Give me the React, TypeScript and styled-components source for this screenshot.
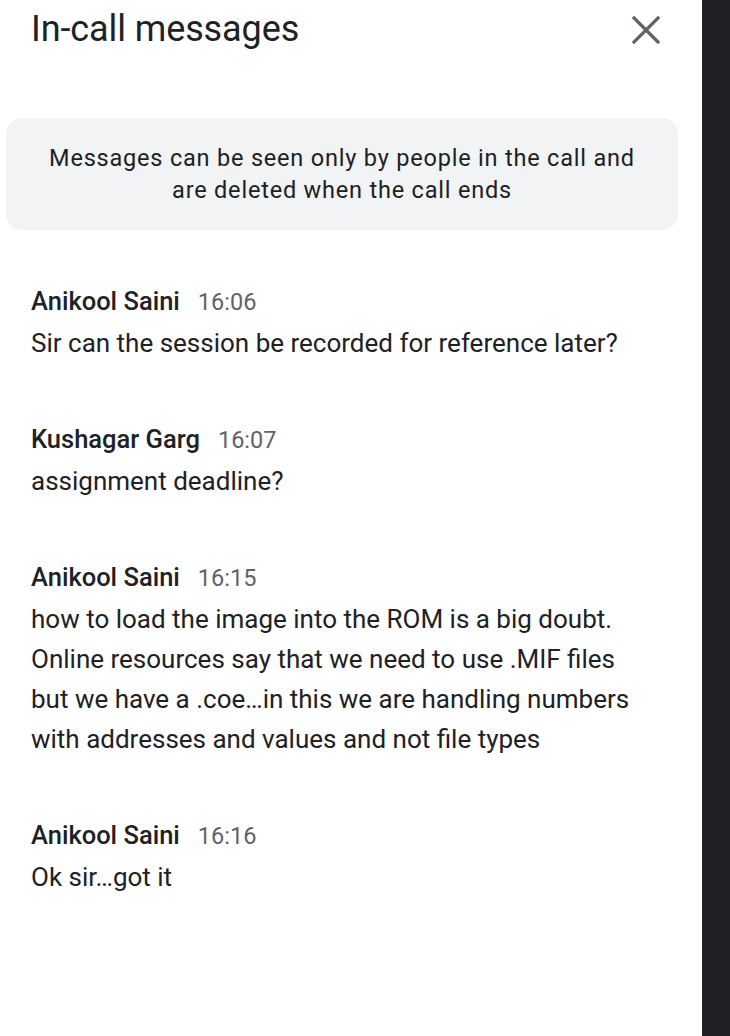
import React from 'react';
import styled, { createGlobalStyle } from 'styled-components';

type Message = {
  author: string;
  time: string;
  lines: string[];
};

const messages: Message[] = [
  {
    author: 'Anikool Saini',
    time: '16:06',
    lines: ['Sir can the session be recorded for reference later?'],
  },
  {
    author: 'Kushagar Garg',
    time: '16:07',
    lines: ['assignment deadline?'],
  },
  {
    author: 'Anikool Saini',
    time: '16:15',
    lines: [
      'how to load the image into the ROM is a big doubt.',
      'Online resources say that we need to use .MIF files',
      'but we have a .coe…in this we are handling numbers',
      'with addresses and values and not file types',
    ],
  },
  {
    author: 'Anikool Saini',
    time: '16:16',
    lines: ['Ok sir…got it'],
  },
];

const GlobalStyle = createGlobalStyle`
  html, body {
    margin: 0;
    padding: 0;
    background: #ffffff;
  }
  body {
    font-family: Roboto, "Liberation Sans", Arial, sans-serif;
    color: #202124;
  }
`;

export default function App() {
  return (
    <>
      <GlobalStyle />
      <StyledScreen>
        <StyledPanel>
          <StyledHeader>
            <StyledTitle>In-call messages</StyledTitle>
            <StyledClose aria-label="Close">
              <svg width="28" height="28" viewBox="0 0 28 28">
                <path
                  d="M2 2 L26 26 M26 2 L2 26"
                  stroke="#5f6368"
                  strokeWidth="3.2"
                  strokeLinecap="square"
                  fill="none"
                />
              </svg>
            </StyledClose>
          </StyledHeader>

          <StyledNotice>
            Messages can be seen only by people in the call and
            <br />
            are deleted when the call ends
          </StyledNotice>

          <StyledList>
            {messages.map((m, i) => (
              <StyledMessage key={i}>
                <StyledMeta>
                  <StyledAuthor>{m.author}</StyledAuthor>
                  <StyledTime>{m.time}</StyledTime>
                </StyledMeta>
                {m.lines.map((line, j) => (
                  <StyledLine key={j}>{line}</StyledLine>
                ))}
              </StyledMessage>
            ))}
          </StyledList>
        </StyledPanel>
        <StyledEdge />
      </StyledScreen>
    </>
  );
}

const StyledScreen = styled.div`
  display: flex;
  width: 730px;
  height: 1036px;
  overflow: hidden;
`;

const StyledPanel = styled.div`
  width: 702px;
  display: flex;
  flex-direction: column;
  background: #ffffff;
`;

const StyledEdge = styled.div`
  width: 28px;
  background: #202124;
`;

const StyledHeader = styled.div`
  display: flex;
  align-items: center;
  justify-content: space-between;
  height: 58px;
  padding: 0 42px 0 31px;
`;

const StyledTitle = styled.h1`
  margin: 0;
  font-family: Roboto, "Liberation Sans", sans-serif;
  font-weight: 400;
  font-size: 36px;
  letter-spacing: -0.1px;
  color: #202124;
`;

const StyledClose = styled.div`
  display: flex;
  width: 28px;
  height: 28px;
  margin-top: 2px;
`;

const StyledNotice = styled.div`
  margin: 60px 24px 0 6px;
  padding: 24px 16px;
  border-radius: 16px;
  background: #f1f3f4;
  text-align: center;
  font-size: 23.5px;
  line-height: 32px;
  letter-spacing: 0.8px;
  color: #202124;
`;

const StyledList = styled.div`
  display: flex;
  flex-direction: column;
  gap: 54px;
  padding: 49px 31px 0;
`;

const StyledMessage = styled.div`
  display: flex;
  flex-direction: column;
`;

const StyledMeta = styled.div`
  display: flex;
  align-items: baseline;
  gap: 18px;
  height: 44px;
  line-height: 44px;
`;

const StyledAuthor = styled.span`
  font-size: 25.5px;
  font-weight: 500;
  color: #202124;
`;

const StyledTime = styled.span`
  font-size: 23.5px;
  color: #5f6368;
`;

const StyledLine = styled.div`
  font-size: 26px;
  line-height: 40px;
  color: #202124;
`;
